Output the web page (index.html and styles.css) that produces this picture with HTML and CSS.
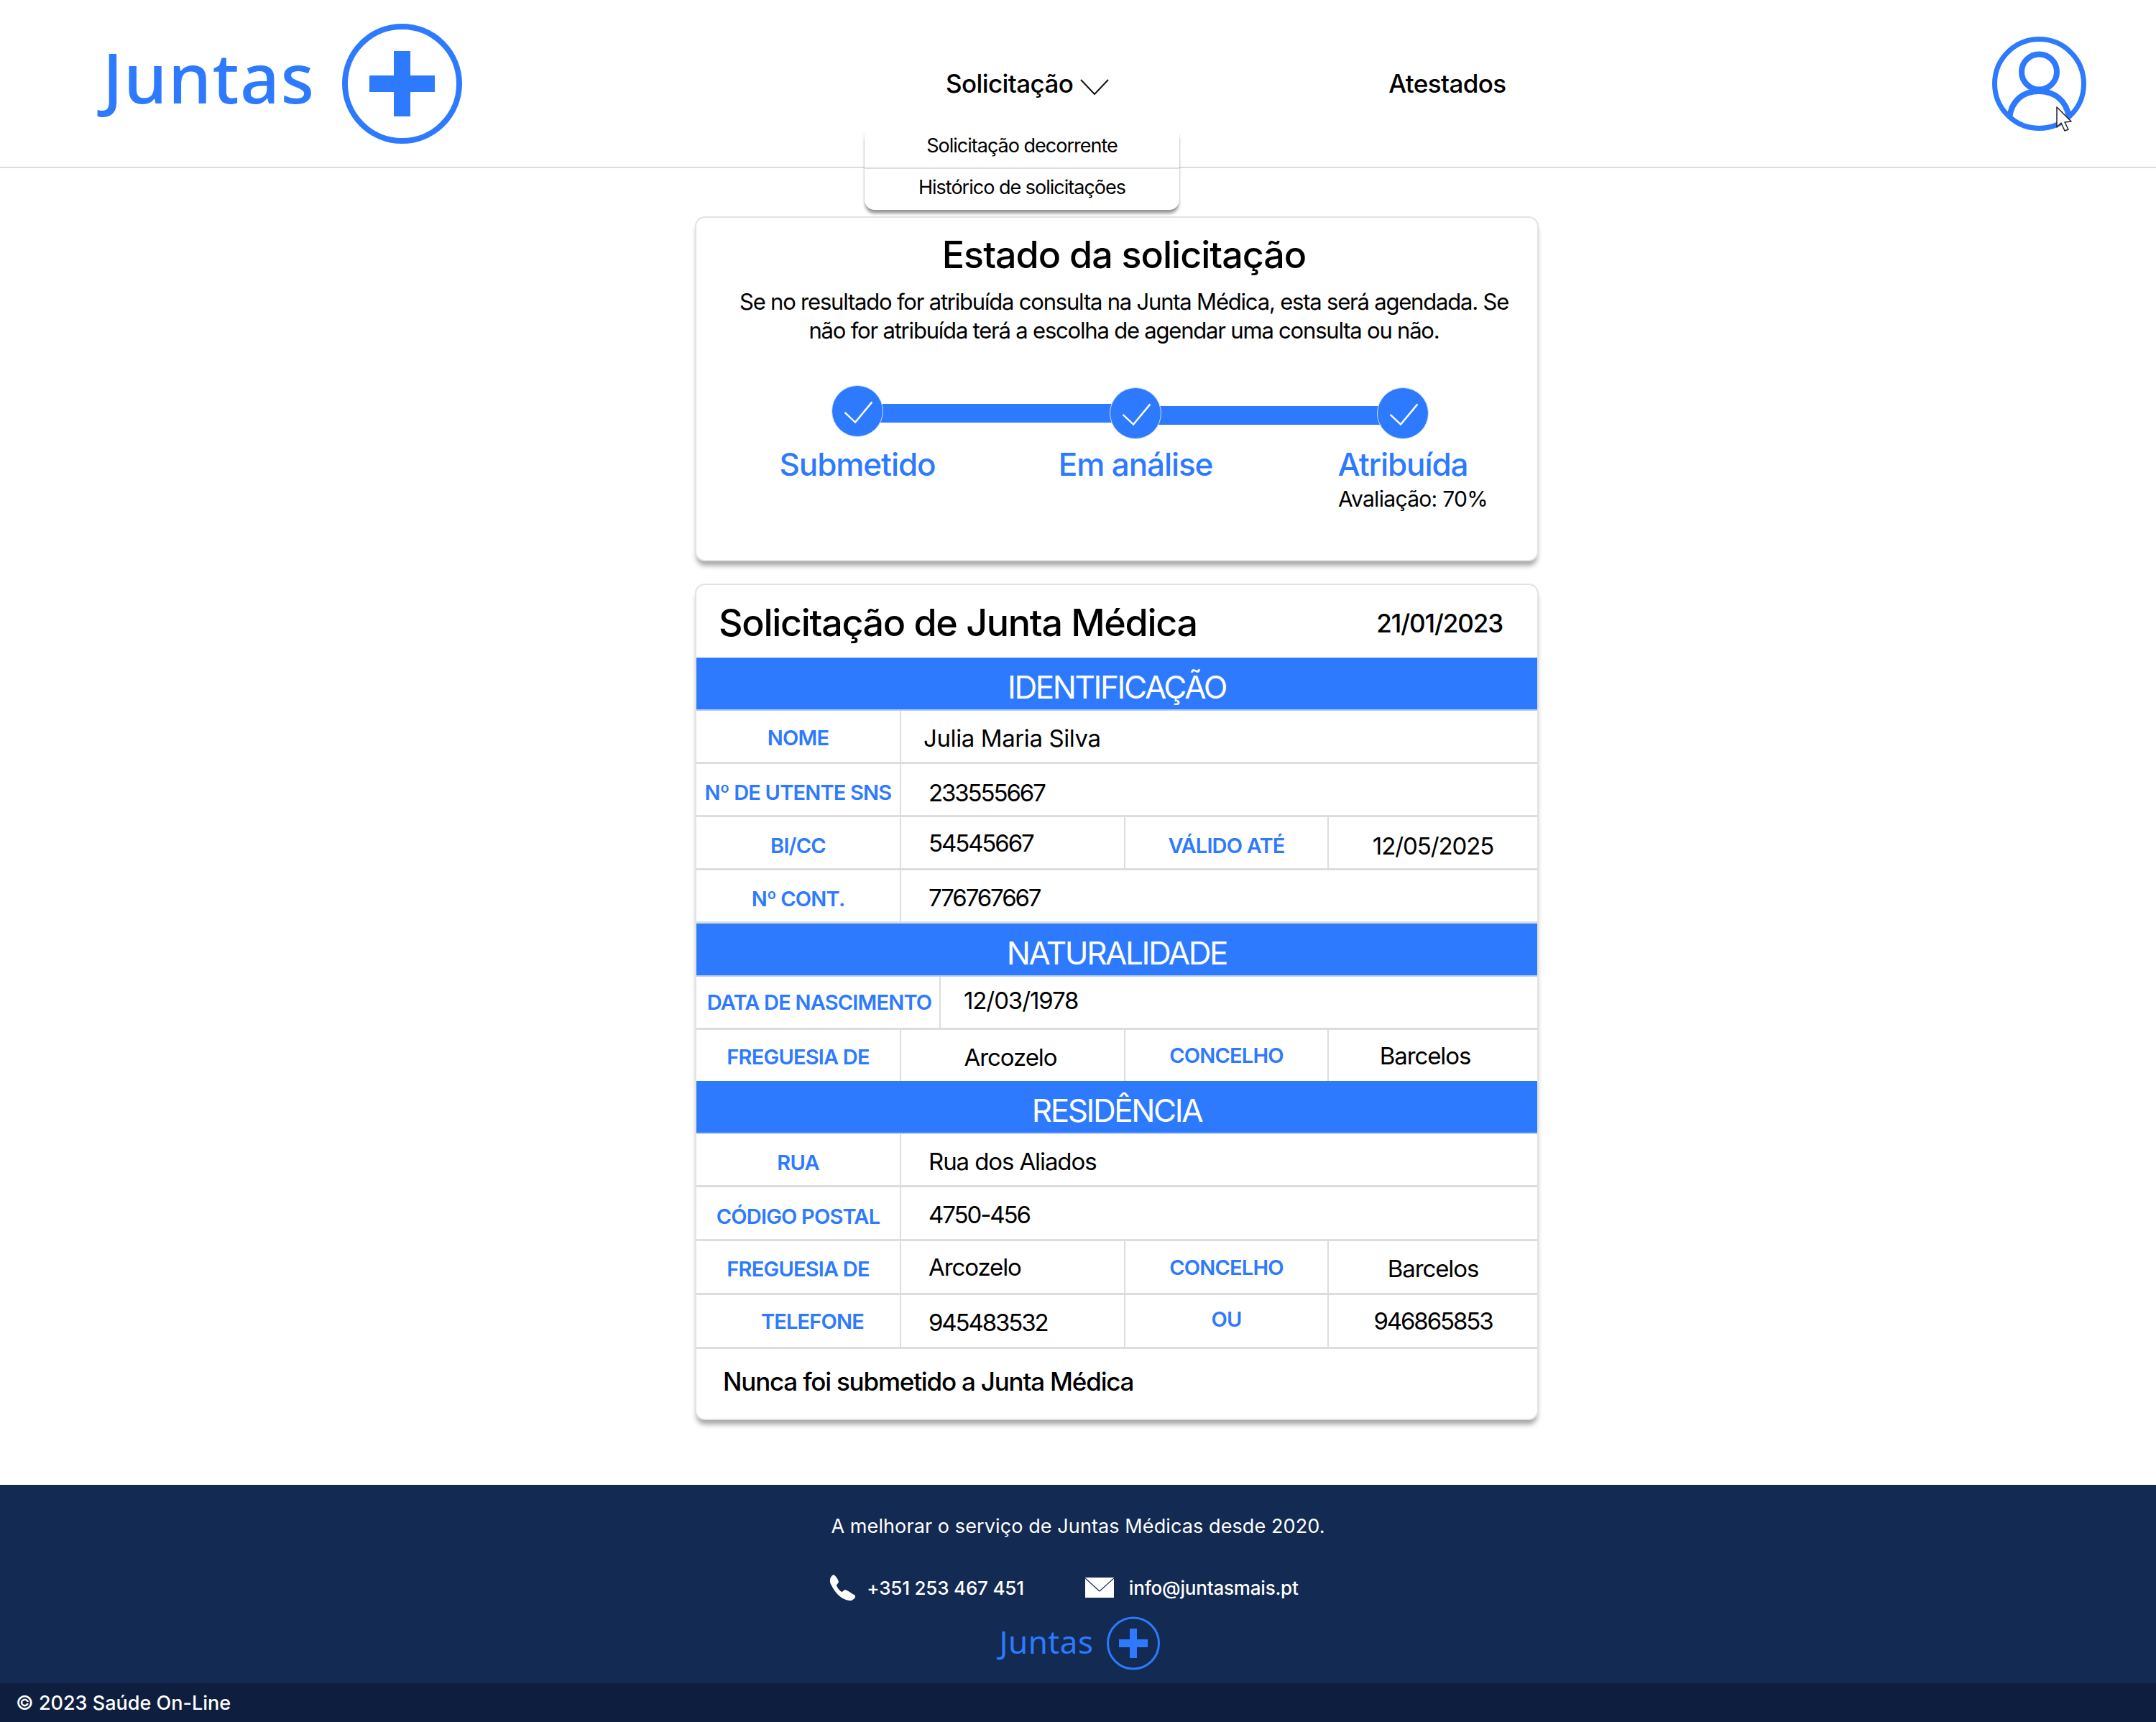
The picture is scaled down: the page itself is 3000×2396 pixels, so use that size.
FILE: index.html
```html
<!DOCTYPE html>
<html lang="pt">
<head>
    <meta charset="UTF-8">
    <meta name="viewport" content="width=device-width, initial-scale=1.0">
    <title>Juntas+ Estado da solicitação</title>
    <link rel="stylesheet" href="styles.css">
</head>
<body>
    <header class="top-bar">
        <a class="logo" href="#">
            <span class="logo-text">Juntas</span>
            <svg class="logo-mark" viewBox="0 0 167 167">
                <circle cx="83.5" cy="83.5" r="79.5" fill="none" stroke="#2d7aff" stroke-width="8"/>
                <path d="M72 38h23v34h34v23H95v34H72V95H38V72h34z" fill="#2d7aff"/>
            </svg>
        </a>
        <nav class="nav">
            <div class="nav-item">
                <span>Solicitação</span>
                <svg class="chevron" viewBox="0 0 40 24">
                    <path d="M1 2l19 20L39 2" fill="none" stroke="#111" stroke-width="2"/>
                </svg>
                <div class="dropdown">
                    <a href="#">Solicitação decorrente</a>
                    <a href="#">Histórico de solicitações</a>
                </div>
            </div>
            <a class="nav-link" href="#">Atestados</a>
        </nav>
        <div class="user">
            <svg class="user-icon" viewBox="0 0 131 133">
                <circle cx="65.5" cy="66.5" r="62" fill="none" stroke="#2d7aff" stroke-width="7"/>
                <circle cx="65.5" cy="50" r="24.5" fill="none" stroke="#2d7aff" stroke-width="8"/>
                <path d="M24 114c3-25 20-37 41-37s38 12 42 36" fill="none" stroke="#2d7aff" stroke-width="8"/>
            </svg>
            <svg class="cursor" viewBox="0 0 26 36">
                <path d="M2 1v28l6-6 5 11 5-2-5-10 9-1z" fill="#fff" stroke="#222" stroke-width="1.5" stroke-linejoin="round"/>
            </svg>
        </div>
    </header>

    <main class="content">
        <section class="card status-card">
            <h1 class="status-title">Estado da solicitação</h1>
            <p class="status-text">Se no resultado for atribuída consulta na Junta Médica, esta será agendada. Se<br>não for atribuída terá a escolha de agendar uma consulta ou não.</p>
            <div class="steps">
                <div class="step step-one">
                    <span class="step-dot"><svg viewBox="0 0 72 72"><path d="M18 38l15 14L57 23" fill="none" stroke="#fff" stroke-width="2.5"/></svg></span>
                    <span class="step-label">Submetido</span>
                </div>
                <span class="step-bar bar-one"></span>
                <div class="step step-two">
                    <span class="step-dot"><svg viewBox="0 0 72 72"><path d="M18 38l15 14L57 23" fill="none" stroke="#fff" stroke-width="2.5"/></svg></span>
                    <span class="step-label">Em análise</span>
                </div>
                <span class="step-bar bar-two"></span>
                <div class="step step-three">
                    <span class="step-dot"><svg viewBox="0 0 72 72"><path d="M18 38l15 14L57 23" fill="none" stroke="#fff" stroke-width="2.5"/></svg></span>
                    <span class="step-label">Atribuída</span>
                    <span class="step-note">Avaliação: 70%</span>
                </div>
            </div>
        </section>

        <section class="card form-card">
            <div class="form-head">
                <h2 class="form-title">Solicitação de Junta Médica</h2>
                <span class="form-date">21/01/2023</span>
            </div>

            <div class="band">IDENTIFICAÇÃO</div>
            <div class="row row-two">
                <div class="cell label low">NOME</div>
                <div class="cell value name low">Julia Maria Silva</div>
            </div>
            <div class="row row-two">
                <div class="cell label lower">Nº DE UTENTE SNS</div>
                <div class="cell value num lower">233555667</div>
            </div>
            <div class="row row-four">
                <div class="cell label lower">BI/CC</div>
                <div class="cell value num">54545667</div>
                <div class="cell label lower">VÁLIDO ATÉ</div>
                <div class="cell value date center lower">12/05/2025</div>
            </div>
            <div class="row row-two">
                <div class="cell label lower">Nº CONT.</div>
                <div class="cell value num low">776767667</div>
            </div>

            <div class="band">NATURALIDADE</div>
            <div class="row row-birth">
                <div class="cell label birth-label">DATA DE NASCIMENTO</div>
                <div class="cell value date birth-value up">12/03/1978</div>
            </div>
            <div class="row row-four">
                <div class="cell label low">FREGUESIA DE</div>
                <div class="cell value center shift-arc low">Arcozelo</div>
                <div class="cell label">CONCELHO</div>
                <div class="cell value center shift-left">Barcelos</div>
            </div>

            <div class="band">RESIDÊNCIA</div>
            <div class="row row-two">
                <div class="cell label lower">RUA</div>
                <div class="cell value low">Rua dos Aliados</div>
            </div>
            <div class="row row-two tall">
                <div class="cell label lower">CÓDIGO POSTAL</div>
                <div class="cell value num low">4750-456</div>
            </div>
            <div class="row row-four tall">
                <div class="cell label low">FREGUESIA DE</div>
                <div class="cell value">Arcozelo</div>
                <div class="cell label">CONCELHO</div>
                <div class="cell value center low">Barcelos</div>
            </div>
            <div class="row row-four tall">
                <div class="cell label phone-label">TELEFONE</div>
                <div class="cell value num low">945483532</div>
                <div class="cell label up">OU</div>
                <div class="cell value num center">946865853</div>
            </div>
            <p class="form-note">Nunca foi submetido a Junta Médica</p>
        </section>
    </main>

    <footer class="footer">
        <div class="footer-main">
            <p class="footer-text">A melhorar o serviço de Juntas Médicas desde 2020.</p>
            <div class="contacts">
                <span class="contact contact-phone">
                    <svg class="phone-icon" viewBox="0 0 37 36">
                        <path d="M7 0c3 2 6 6 7 10 0 2-3 3-3 5 1 3 4 7 7 9 2 0 3-3 5-3 4 1 9 5 14 8 1 2-1 5-5 7-12 1-22-9-28-21C0 9 2 2 7 0z" fill="#fff"/>
                    </svg>
                    +351 253 467 451
                </span>
                <span class="contact contact-mail">
                    <svg class="mail-icon" viewBox="0 0 40 28">
                        <rect width="40" height="28" fill="#fff"/>
                        <path d="M0 1l20 18L40 1" fill="none" stroke="#132a52" stroke-width="1.2"/>
                    </svg>
                    info@juntasmais.pt
                </span>
            </div>
            <a class="logo logo-small" href="#">
                <span class="logo-text">Juntas</span>
                <svg class="logo-mark" viewBox="0 0 74 75">
                    <circle cx="37" cy="37.5" r="35.5" fill="none" stroke="#2d7aff" stroke-width="3"/>
                    <path d="M32 17h10v15h15v11H42v15H32V43H17V32h15z" fill="#2d7aff"/>
                </svg>
            </a>
        </div>
        <div class="footer-bottom">© 2023 Saúde On-Line</div>
    </footer>
</body>
</html>
```

FILE: styles.css
```css
* {
    box-sizing: border-box;
}

body {
    margin: 0;
    font-family: Inter, "Noto Sans", sans-serif;
    color: #000;
    background-color: #fff;
}

a {
    color: inherit;
    text-decoration: none;
}

h1, h2, p {
    margin: 0;
    font-weight: 500;
}

/* Header */
.top-bar {
    display: flex;
    align-items: center;
    height: 234px;
    padding: 0 97px 0 143px;
    border-bottom: 2px solid #ddd;
}

.logo {
    display: flex;
    align-items: center;
    color: #2d7aff;
}

.logo-text {
    width: 297px;
    padding-bottom: 18px;
    font-family: "Noto Sans", sans-serif;
    font-size: 96px;
    font-weight: 500;
    line-height: 1;
    letter-spacing: 1.5px;
}

.logo-mark {
    width: 167px;
    height: 167px;
    margin-left: 36px;
}

.nav {
    display: flex;
    align-items: center;
    margin-left: 673px;
    font-size: 35px;
    font-weight: 500;
    letter-spacing: -0.6px;
}

.nav-item {
    position: relative;
    display: flex;
    align-items: center;
}

.chevron {
    width: 40px;
    height: 24px;
    margin: 10px 0 0 10px;
}

.nav-link {
    margin-left: 389px;
}

.dropdown {
    position: absolute;
    top: 90px;
    left: -113px;
    width: 438px;
    height: 107px;
    font-size: 27px;
    font-weight: 400;
    letter-spacing: -1px;
    text-align: center;
    background-color: #fff;
    border-radius: 0 0 14px 14px;
    box-shadow: 0 6px 4px -1px rgba(0, 0, 0, 0.4), 0 0 3px rgba(0, 0, 0, 0.15);
    clip-path: inset(0 -10px -20px -10px);
}

.dropdown a {
    display: block;
    height: 48px;
    line-height: 36px;
}

.dropdown a + a {
    height: 59px;
    border-top: 2px solid #ddd;
    line-height: 52px;
}

.user {
    position: relative;
    margin-left: auto;
    width: 131px;
    height: 133px;
}

.user-icon {
    display: block;
    width: 131px;
    height: 133px;
}

.cursor {
    position: absolute;
    top: 98px;
    left: 88px;
    width: 26px;
    height: 36px;
}

/* Cards */
.content {
    display: flex;
    flex-direction: column;
    gap: 35px;
    padding: 69px 0 92px 969px;
}

.card {
    width: 1170px;
    background-color: #fff;
    border-radius: 12px;
    box-shadow: 0 0 0 2px #e2e2e2, 0 8px 7px rgba(0, 0, 0, 0.35);
}

.status-card {
    height: 476px;
    padding-top: 24px;
    text-align: center;
}

.status-title {
    padding-left: 20px;
    font-size: 52px;
    line-height: 56px;
    letter-spacing: -1px;
}

.status-text {
    margin-top: 17px;
    padding-left: 20px;
    font-size: 31px;
    font-weight: 400;
    line-height: 40px;
    letter-spacing: -1.2px;
}

.steps {
    position: relative;
    height: 200px;
    margin-top: 56px;
}

.step {
    position: absolute;
    display: flex;
    flex-direction: column;
    align-items: center;
    width: 260px;
}

.step-one {
    top: 0;
    left: 94px;
}

.step-two {
    top: 3px;
    left: 481px;
}

.step-three {
    top: 3px;
    left: 853px;
}

.step-dot {
    z-index: 1;
    width: 72px;
    height: 72px;
    background-color: #2d7aff;
    border: 1px solid #cfe0ff;
    border-radius: 50%;
}

.step-dot svg {
    display: block;
    width: 70px;
    height: 70px;
}

.step-label {
    margin-top: 7px;
    font-size: 44px;
    font-weight: 500;
    line-height: 56px;
    letter-spacing: -1.1px;
    color: #2d7aff;
}

.step-one .step-label {
    margin-top: 10px;
}

.step-note {
    align-self: flex-start;
    margin-left: 40px;
    font-size: 30px;
    line-height: 40px;
    letter-spacing: -0.7px;
}

.step-bar {
    position: absolute;
    height: 26px;
    background-color: #2d7aff;
}

.bar-one {
    top: 26px;
    left: 255px;
    width: 325px;
}

.bar-two {
    top: 29px;
    left: 640px;
    width: 312px;
}

/* Form card */
.form-card {
    height: 1160px;
    overflow: hidden;
}

.form-head {
    display: flex;
    align-items: center;
    justify-content: space-between;
    height: 101px;
    padding: 4px 48px 0 31px;
}

.form-title {
    font-size: 52px;
    letter-spacing: -1.3px;
}

.form-date {
    font-size: 35px;
    font-weight: 500;
    letter-spacing: -1.1px;
}

.band {
    height: 74px;
    padding-top: 7px;
    font-size: 44px;
    line-height: 68px;
    letter-spacing: -2.4px;
    text-align: center;
    color: #fff;
    background-color: #2d7aff;
    border-bottom: 2px solid #b9cdf3;
}

.row {
    display: grid;
    height: 74px;
    border-bottom: 3px solid #ddd;
}

.row-four:has(+ .band) {
    height: 71px;
    border-bottom: 0;
}

.row.tall {
    height: 75px;
}

.row-two {
    grid-template-columns: 285px 1fr;
}

.row-four {
    grid-template-columns: 285px 312px 283px 1fr;
}

.row-birth {
    grid-template-columns: 340px 1fr;
}

.cell {
    display: flex;
    align-items: center;
    border-right: 2px solid #ddd;
}

.cell:last-child {
    border-right: 0;
}

.low {
    padding-top: 4px;
}

.lower {
    padding-top: 8px;
}

.up {
    padding-bottom: 6px;
}

.label {
    justify-content: center;
    font-size: 29px;
    font-weight: 600;
    letter-spacing: -0.8px;
    color: #2d7aff;
}

.birth-label {
    padding-left: 4px;
}

.phone-label {
    padding: 0 0 0 40px;
}

.value {
    padding-left: 38px;
    font-size: 33px;
    letter-spacing: -1.1px;
}

.value.num {
    letter-spacing: -2.1px;
}

.value.date {
    letter-spacing: -1.1px;
}

.value.name {
    padding-left: 31px;
    letter-spacing: -0.4px;
}

.value.center {
    justify-content: center;
    padding-left: 0;
}

.value.birth-value {
    padding-left: 32px;
}

.value.shift-arc {
    padding-right: 6px;
}

.value.shift-left {
    padding-right: 22px;
}

.form-note {
    padding: 24px 0 0 37px;
    font-size: 35px;
    letter-spacing: -1.2px;
}

/* Footer */
.footer {
    color: #fff;
    background-color: #132a52;
}

.footer-main {
    display: flex;
    flex-direction: column;
    align-items: center;
    height: 276px;
    padding-top: 40px;
}

.footer-text {
    font-size: 27px;
    font-weight: 400;
    line-height: 36px;
    letter-spacing: 0.1px;
}

.contacts {
    display: flex;
    align-items: center;
    height: 40px;
    margin: 47px 40px 0 0;
    font-size: 26px;
    font-weight: 500;
    letter-spacing: -0.2px;
}

.contact {
    display: flex;
    align-items: center;
}

.phone-icon {
    width: 37px;
    height: 36px;
    margin-right: 16px;
}

.mail-icon {
    width: 40px;
    height: 28px;
    margin-right: 21px;
}

.contact-mail {
    margin-left: 85px;
}

.logo-small {
    margin: 20px 0 0 4px;
}

.logo-small .logo-text {
    width: auto;
    padding-bottom: 6px;
    font-size: 44px;
    font-weight: 400;
    letter-spacing: 0.5px;
}

.logo-small .logo-mark {
    width: 74px;
    height: 75px;
    margin-left: 18px;
}

.footer-bottom {
    height: 54px;
    padding-left: 22px;
    font-size: 27px;
    font-weight: 500;
    line-height: 56px;
    background-color: #0e1e3e;
}
```
